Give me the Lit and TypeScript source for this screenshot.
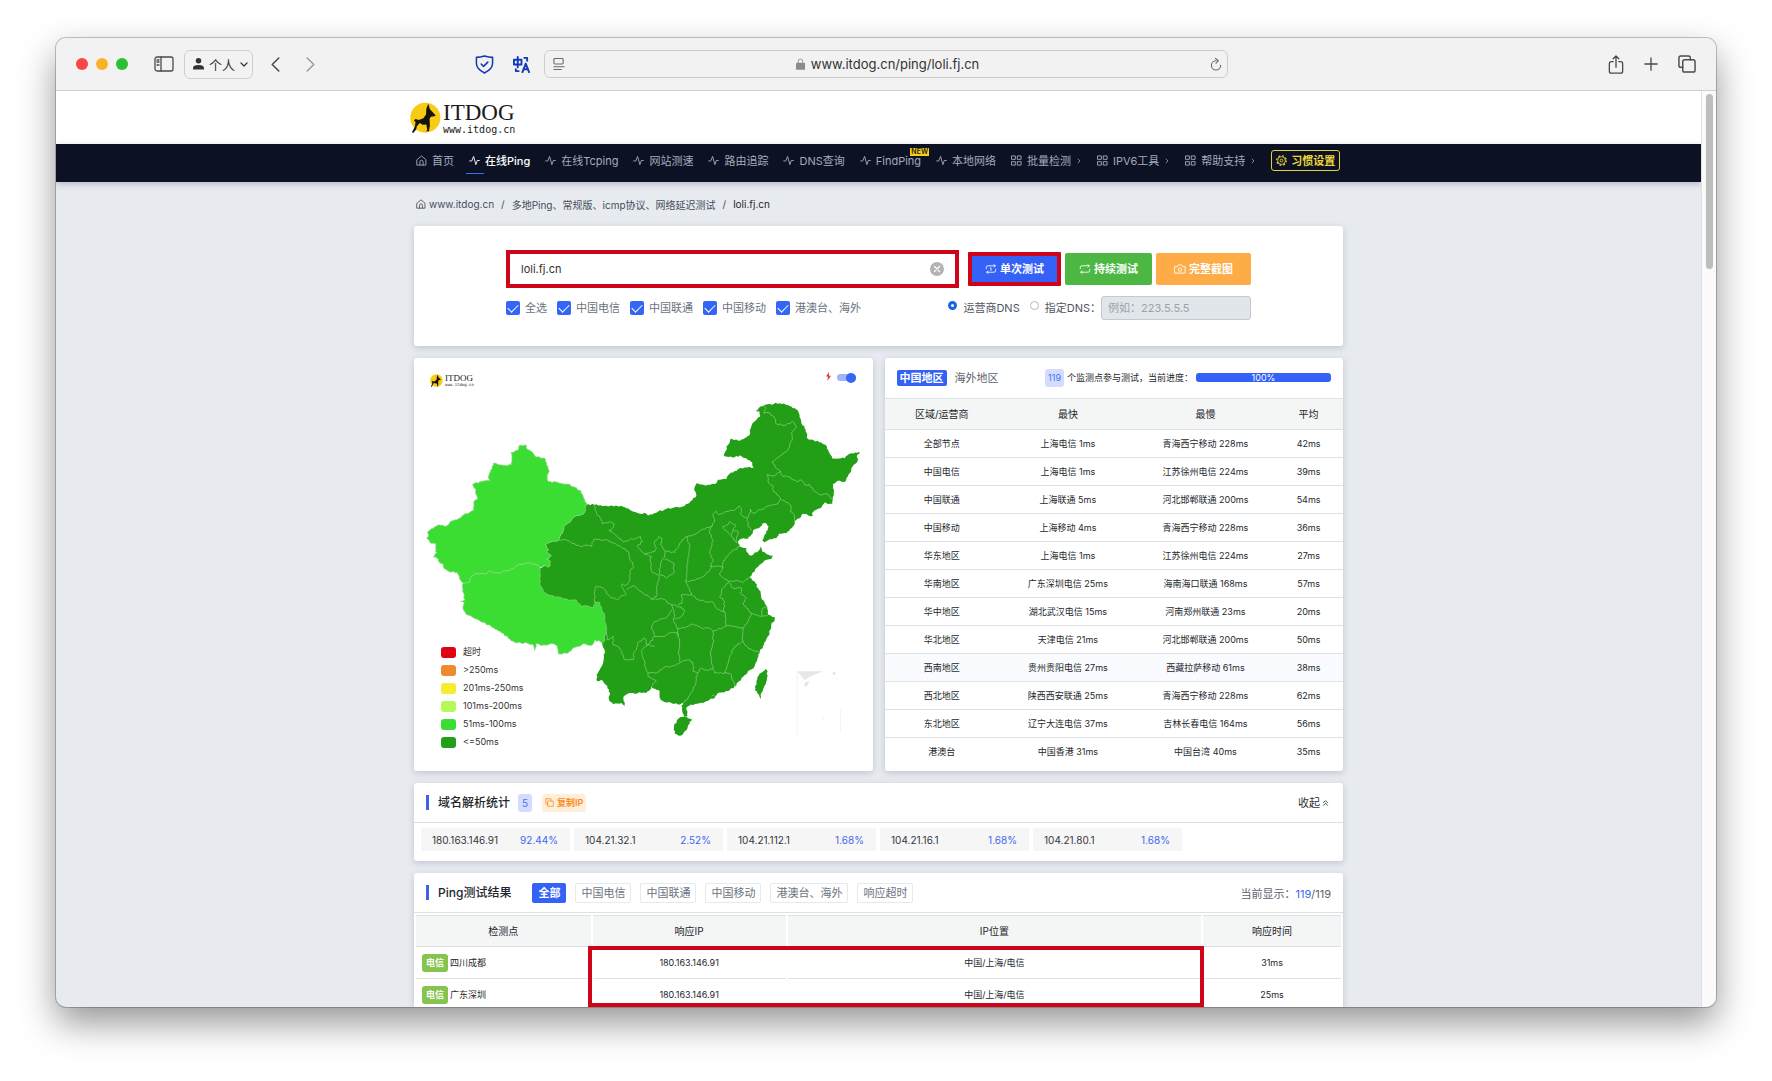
import { LitElement, html, svg, css, nothing } from "lit";
import { customElement } from "lit/decorators.js";
import { classMap } from "lit/directives/class-map.js";

/* ---------- icons ---------- */

const stroked = (body: unknown, box = "0 0 24 24", width = 2) => html`
  <svg viewBox=${box} fill="none" stroke="currentColor" stroke-width=${width}
    stroke-linecap="round" stroke-linejoin="round" aria-hidden="true">${body}</svg>`;

const icons = {
  home: stroked(svg`<path d="M2.500 10 12 2l9.500 8v12h-19z"/><path d="M8.500 22v-7a3.500 3.500 0 0 1 7 0v7"/>`),
  pulse: stroked(svg`<path d="M1.500 13H6l4-10 5 18 3-9h4.500"/>`),
  grid: stroked(svg`<rect x="2" y="2" width="7.500" height="7.500"/><rect x="14.500" y="2" width="7.500" height="7.500"/><rect x="2" y="14.500" width="7.500" height="7.500"/><rect x="14.500" y="14.500" width="7.500" height="7.500"/>`),
  chevron: stroked(svg`<path d="M8 4l8 8-8 8"/>`, "0 0 24 24", 3),
  gear: html`<svg viewBox="0 0 24 24" fill="none" stroke="currentColor" aria-hidden="true"><circle cx="12" cy="12" r="8.500" stroke-width="2"/><circle cx="12" cy="12" r="10.500" stroke-width="2.500" stroke-dasharray="4.100 4.147"/><circle cx="12" cy="12" r="3" stroke-width="2"/></svg>`,
  loopOne: stroked(svg`<path d="M3 11V8a4 4 0 0 1 4-4h17M21 1l3 3-3 3M25 12v3a4 4 0 0 1-4 4H4M7 22l-3-3 3-3M12.500 9.500l1.500-1v6"/>`, "0 0 28 23"),
  loop: stroked(svg`<path d="M3 11V8a4 4 0 0 1 4-4h17M21 1l3 3-3 3M25 12v3a4 4 0 0 1-4 4H4M7 22l-3-3 3-3"/>`, "0 0 28 23"),
  camera: stroked(svg`<path d="M2 6h6l2-4h8l2 4h6v15H2z"/><circle cx="14" cy="13" r="4"/>`, "0 0 28 23"),
  copy: stroked(svg`<path d="M8 8h14v14H8zM16 8V2H2v14h6"/>`),
  doubleUp: stroked(svg`<path d="M5 11l7-7 7 7M5 20l7-7 7 7"/>`, "0 0 24 24", 3),
  sidebar: stroked(svg`<rect x="1" y="1" width="18" height="14" rx="2"/><path d="M7 1v14M3 4h2M3 6h2M3 9h2"/>`, "0 0 20 16", 1.3),
  person: html`<svg viewBox="0 0 12 13" fill="currentColor" aria-hidden="true"><circle cx="6" cy="3" r="3"/><path d="M0 12.500V11c0-2.500 2-3.500 6-3.500s6 1 6 3.500v1.500z"/></svg>`,
  down: stroked(svg`<path d="M1 1l3 3 3-3"/>`, "0 0 8 5", 1.2),
  back: stroked(svg`<path d="M8 1L1 8l7 7"/>`, "0 0 9 16", 1.6),
  forward: stroked(svg`<path d="M1 1l7 7-7 7"/>`, "0 0 9 16", 1.6),
  shield: stroked(svg`<path d="M10 1c3 1 5.500 1.500 8.500 1.500V9c0 4-3.500 7.500-8.500 10C5 16.500 1.500 13 1.500 9V2.500C4.500 2.500 7 2 10 1z"/><path d="M6.500 9.500l2.500 2.500 4.500-4.500"/>`, "0 0 20 20", 1.6),
  translate: stroked(svg`<path d="M1 4h8v5H1zM5 1v11M12 2h3v3M3 14v2h3M10 17l3.500-9 3.500 9M11 14h5"/>`, "0 0 18 18", 2),
  reader: stroked(svg`<rect x="1" y="1" width="10" height="6" rx="1"/><path d="M1 10h11M1 13h8"/>`, "0 0 13 14", 1.2),
  lock: html`<svg viewBox="0 0 10 13" aria-hidden="true"><rect y="5" width="10" height="8" rx="1" fill="#8b8b8b"/><path d="M2.500 6V3.500a2.500 2.500 0 0 1 5 0V6" fill="none" stroke="#8b8b8b"/></svg>`,
  reload: stroked(svg`<path d="M6.500 3.500a5 5 0 1 0 5 5M6 1l3 2.500L6.500 6"/>`, "0 0 13 14", 1.2),
  share: stroked(svg`<path d="M5 7H3a2 2 0 0 0-2 2v8a2 2 0 0 0 2 2h10a2 2 0 0 0 2-2V9a2 2 0 0 0-2-2h-2M8 13V1M5 4l3-3 3 3"/>`, "0 0 16 20", 1.4),
  plus: stroked(svg`<path d="M8 1v14M1 8h14"/>`, "0 0 16 16", 1.5),
  tabs: stroked(svg`<rect x="5" y="5" width="13" height="13" rx="2"/><path d="M5 13H3a2 2 0 0 1-2-2V3a2 2 0 0 1 2-2h8a2 2 0 0 1 2 2v2"/>`, "0 0 19 19", 1.5),
  bolt: html`<svg viewBox="0 0 6 10" fill="#e03a3a" aria-hidden="true"><path d="M3.500 0L0 5h2.300L1.700 10 6 4H3.600z"/></svg>`,
  clear: html`<svg viewBox="0 0 14 14" aria-hidden="true"><circle cx="7" cy="7" r="7" fill="#b3b3b3"/><path d="M4.500 4.500l5 5M9.500 4.500l-5 5" stroke="#fff" stroke-width="1.300" stroke-linecap="round"/></svg>`,
};

const dogMark = html`
  <svg class="mark" viewBox="29 22 93 95" aria-hidden="true">
    <circle cx="75" cy="70" r="46" fill="#f8cb14"/>
    <path fill="#15120c" d="M84 27l5 17 16 17 1 4-14 2-4 6 1 20-3 19h-9l4-5-3-16-11 1-9-6-9 10-2 10-9 11-4-2 9-18 2-14-5-4 5-5 10 3 14-5 8-12 1-17z"/>
  </svg>`;

/* ---------- map geometry ---------- */

type Point = [number, number];

const parse = (text: string): Point[] =>
  text.trim().split(/\s+/).map((pair) => pair.split(",").map(Number) as Point);

const noise = (n: number) => {
  const s = Math.sin(n) * 43758.5453;
  return s - Math.floor(s) - 0.5;
};

/* Breaks each segment into short jagged steps. The offsets depend on the
   segment alone, so an edge shared by two provinces stays shared. */
const jagged = (text: string, closed = false) => {
  const points = parse(text);
  if (closed) points.push(points[0]);
  const out: string[] = [`M${points[0]}`];
  for (let i = 1; i < points.length; i++) {
    const from = points[i - 1];
    const to = points[i];
    const flip = from[0] > to[0] || (from[0] === to[0] && from[1] > to[1]);
    const [a, b] = flip ? [to, from] : [from, to];
    const dx = b[0] - a[0];
    const dy = b[1] - a[1];
    const length = Math.hypot(dx, dy) || 1;
    const steps = Math.max(1, Math.round(length / 6));
    const mids: string[] = [];
    for (let k = 1; k < steps; k++) {
      const t = k / steps;
      const shift = noise(a[0] * 12.9 + a[1] * 78.2 + b[0] * 3.7 + k * 17.3) * 5;
      mids.push(`L${(a[0] + dx * t - (dy / length) * shift).toFixed(1)},${(a[1] + dy * t + (dx / length) * shift).toFixed(1)}`);
    }
    if (flip) mids.reverse();
    out.push(...mids, `L${to}`);
  }
  return out.join("") + (closed ? "Z" : "");
};

const mainland = jagged(`560,405 590,404 620,408 665,408 690,420 715,430 740,432 745,437 775,425 800,417 850,410 870,398 890,378 884,362 890,340
 920,347 950,340 955,330 980,328 990,312 1015,298 1035,293 1062,293 1058,278 1040,265 1020,257 1005,262 980,260 972,255 985,225 993,206 1015,212
 1035,205 1050,195 1055,170 1065,155 1082,140 1080,125 1068,123 1082,110 1105,103 1140,100 1165,105 1190,118 1200,135 1205,155 1215,175 1222,190
 1225,207 1265,218 1282,230 1290,250 1298,266 1335,265 1355,250 1380,245 1372,262 1375,272 1362,285 1345,320 1338,335 1315,333 1300,343 1303,365
 1300,388 1298,402 1285,403 1275,398 1262,415 1250,420 1237,430 1240,438 1210,432 1200,445 1185,455 1180,470 1160,490 1138,492 1130,505 1110,508
 1095,517 1088,512 1100,490 1107,470 1100,460 1088,462 1078,475 1060,482 1055,495 1045,507 1025,507 1015,515 1020,530 1040,535 1045,550 1055,558
 1065,548 1078,542 1083,530 1088,545 1100,553 1120,557 1115,568 1095,572 1085,582 1070,595 1065,605 1058,610 1050,622 1065,635 1075,655 1083,665
 1085,685 1095,700 1103,712 1106,735 1125,742 1125,752 1115,765 1112,780 1105,800 1098,815 1090,830 1080,850 1073,870 1068,880 1062,895 1045,905
 1030,922 1015,938 1005,950 990,962 975,968 955,970 945,985 930,990 910,1000 885,1003 865,1010 860,1020 863,1040 852,1042 847,1020 845,1008 850,1000
 835,1005 815,1000 790,995 780,985 780,965 765,957 755,950 750,962 738,970 720,968 705,972 690,970 672,980 672,995 676,1010 665,1000 640,1003
 628,992 630,975 628,960 618,945 605,930 592,935 590,915 600,900 610,880 615,850 608,825 600,740 500,700 415,670 410,600 430,590 452,575 445,530 480,510 500,480 550,435`, true);

const xinjiang = jagged(`560,405 552,385 543,363 525,352 505,343 480,340 445,335 442,322 448,305 440,285 437,268 420,262 405,258 395,245 382,238
 380,226 360,225 357,237 345,243 333,248 336,268 334,285 318,287 300,285 280,280 273,300 266,318 270,332 245,335 218,343 228,358 231,390 222,395
 220,422 195,432 172,450 150,457 135,470 115,465 100,475 82,487 86,495 80,505 90,518 107,522 110,550 100,562 115,568 120,580 130,585 133,597
 155,607 172,608 178,625 190,640 207,638 213,622 225,612 260,612 270,603 282,610 305,608 340,597 350,588 385,580 410,585 420,592 430,588 448,592
 452,575 440,568 455,558 440,545 447,540 437,525 450,518 475,512 488,490 492,468 510,458 525,440 553,430`, true);

const gansuTip = jagged("560,405 553,430 525,440 510,458 492,468 488,490 475,512 450,518 437,525 447,540 440,545 455,558 440,568 452,575 448,592 500,600 580,500 590,404", true);

const tibet = jagged(`190,640 207,638 213,622 225,612 260,612 270,603 282,610 305,608 340,597 350,588 385,580 410,585 420,592 422,620 420,645
 430,665 445,675 490,687 530,692 545,712 560,708 580,714 585,695 600,698 608,725 615,740 620,780 615,808 608,820 585,810 577,827 550,822 540,830
 520,835 505,850 475,852 472,828 455,822 430,826 408,822 405,842 398,824 372,820 345,818 325,805 300,785 285,778 265,765 245,757 235,750 200,735
 190,720 193,700 182,695 195,690 188,665`, true);

const hainan = jagged("838,1045 855,1042 876,1048 870,1062 862,1080 845,1098 825,1092 823,1068", true);
const taiwan = jagged("1098,898 1104,905 1102,925 1092,955 1085,970 1082,988 1078,975 1066,962 1070,935 1080,912", true);

const borders = [
  "580,405 590,425 592,435 605,450 608,462 630,456 643,462 640,475 628,480 650,498 672,517 690,510 712,505 722,500 728,515 712,530 735,553 765,545 770,535 763,518 778,500 786,505 783,525 797,545 825,548 840,520 862,500 880,495 905,480 938,468 945,450 938,435 950,425 958,435 985,425 1003,422 1018,408 1025,418 1022,432 1043,445 1050,430 1052,418 1060,430 1100,410 1135,402 1143,388 1130,370 1120,360 1122,350 1108,340 1102,315 1125,318 1143,305",
  "1143,305 1130,295 1118,275 1150,250 1165,240 1178,210 1175,190 1190,170 1180,155 1160,165 1130,162 1125,145 1112,130 1092,130 1100,115 1090,105",
  "1143,305 1150,320 1170,322 1190,335 1205,330 1215,345 1230,343 1240,360 1262,375 1280,372 1300,388",
  "1143,388 1165,398 1175,408 1172,425 1182,432 1185,455",
  "1043,445 1045,470 1055,482",
  "475,512 488,510 510,515 540,530 555,527 575,530 582,508 605,512 620,510 640,520 660,528 685,545 690,565 702,590 690,605 690,630 680,645 665,645 672,660 680,672 662,680 650,690 630,680 610,655 590,648 585,665 585,695",
  "680,660 700,648 712,655 730,670 755,688 770,680 770,650 778,630 775,615 755,605 752,575 755,560 735,553",
  "797,545 795,560 783,580 778,600 780,615 800,625 822,610 822,580 795,568",
  "755,688 790,688 815,705 845,712 855,725 840,745 825,748",
  "862,500 870,530 865,570 862,600 858,635 870,660 875,675 845,675 848,700 835,705",
  "938,468 930,485 940,515 930,545 940,575 928,605 910,620 880,632 858,635",
  "930,588 970,592 960,615 985,635 1010,632 1030,638 1050,622",
  "970,592 970,575 990,550 1020,530",
  "875,675 900,692 940,698 950,715 975,728 980,768",
  "985,640 970,655 960,680 975,695 972,715 975,728",
  "985,635 1000,655 1025,655 1022,670 1040,685 1030,700 1040,715 1055,730 1085,740 1106,735",
  "1085,740 1090,715 1103,712",
  "1055,730 1045,755 1030,775 1000,770 980,768",
  "815,705 825,735 822,755 832,775 835,800",
  "815,720 800,745 765,755 755,775 765,800 790,800 810,790 835,790",
  "832,778 865,770 880,762 905,775 930,775 940,785 980,768",
  "835,790 840,820 835,850 842,878 865,870 880,878 880,905 893,910 905,895 925,903 940,895",
  "940,785 940,820 932,850 940,895 945,910 975,910 995,915 1005,950",
  "1030,775 1030,815 1005,830 990,860 975,910",
  "1030,815 1045,835 1080,850",
  "765,800 745,825 725,845 735,880 745,910 770,910 790,895 815,890 842,878",
  "620,780 622,810 640,800 640,825 660,835 675,870 700,870 705,845 718,815 735,805 740,825 765,830",
  "745,910 745,920 770,935 755,950",
  "893,910 885,950 865,985 850,1000",
  "990,495 975,480 970,470 985,465 990,455 1007,465 1000,480 1015,485 1010,505 1012,520 995,500 1000,480",
  "936,980 942,975 946,982",
].map((line) => jagged(line));

/* ---------- data ---------- */

const navItems = [
  { label: "首页", icon: icons.home },
  { label: "在线Ping", icon: icons.pulse, active: true },
  { label: "在线Tcping", icon: icons.pulse },
  { label: "网站测速", icon: icons.pulse },
  { label: "路由追踪", icon: icons.pulse },
  { label: "DNS查询", icon: icons.pulse },
  { label: "FindPing", icon: icons.pulse, fresh: true },
  { label: "本地网络", icon: icons.pulse },
  { label: "批量检测", icon: icons.grid, more: true },
  { label: "IPV6工具", icon: icons.grid, more: true },
  { label: "帮助支持", icon: icons.grid, more: true },
];

const lines = ["全选", "中国电信", "中国联通", "中国移动", "港澳台、海外"];

const legend = [
  ["red", "超时"],
  ["orange", ">250ms"],
  ["yellow", "201ms-250ms"],
  ["lime", "101ms-200ms"],
  ["green", "51ms-100ms"],
  ["deep", "<=50ms"],
];

const regions = [
  ["全部节点", "上海电信 1ms", "青海西宁移动 228ms", "42ms"],
  ["中国电信", "上海电信 1ms", "江苏徐州电信 224ms", "39ms"],
  ["中国联通", "上海联通 5ms", "河北邯郸联通 200ms", "54ms"],
  ["中国移动", "上海移动 4ms", "青海西宁移动 228ms", "36ms"],
  ["华东地区", "上海电信 1ms", "江苏徐州电信 224ms", "27ms"],
  ["华南地区", "广东深圳电信 25ms", "海南海口联通 168ms", "57ms"],
  ["华中地区", "湖北武汉电信 15ms", "河南郑州联通 23ms", "20ms"],
  ["华北地区", "天津电信 21ms", "河北邯郸联通 200ms", "50ms"],
  ["西南地区", "贵州贵阳电信 27ms", "西藏拉萨移动 61ms", "38ms"],
  ["西北地区", "陕西西安联通 25ms", "青海西宁移动 228ms", "62ms"],
  ["东北地区", "辽宁大连电信 37ms", "吉林长春电信 164ms", "56ms"],
  ["港澳台", "中国香港 31ms", "中国台湾 40ms", "35ms"],
];
const hoveredRegion = "西南地区";

const resolved = [
  ["180.163.146.91", "92.44%"],
  ["104.21.32.1", "2.52%"],
  ["104.21.112.1", "1.68%"],
  ["104.21.16.1", "1.68%"],
  ["104.21.80.1", "1.68%"],
];

const filters = ["全部", "中国电信", "中国联通", "中国移动", "港澳台、海外", "响应超时"];

const results = [
  ["电信", "四川成都", "180.163.146.91", "中国/上海/电信", "31ms"],
  ["电信", "广东深圳", "180.163.146.91", "中国/上海/电信", "25ms"],
];

/* ---------- shared styles ---------- */

const base = css`
  * { box-sizing: border-box; }
  svg { display: block; flex: none; }
  a { color: inherit; text-decoration: none; }
  button, input { font: inherit; color: inherit; margin: 0; }
  button { background: none; border: 0; padding: 0; cursor: pointer; white-space: nowrap; }
  table { border-collapse: collapse; width: 100%; table-layout: fixed; }
  th, td { padding: 0; text-align: center; white-space: nowrap; }
  .card {
    background: #fff;
    border-radius: 3px;
    box-shadow: 0 2px 6px rgba(120, 130, 155, 0.35);
  }
`;

/* ---------- browser toolbar ---------- */

@customElement("browser-bar")
export class BrowserBar extends LitElement {
  static styles = [base, css`
    :host {
      display: flex;
      align-items: center;
      height: 53px;
      padding: 0 20px;
      background: #f2f2f2;
      border-bottom: 1px solid #cfcfcf;
      color: #4a4a4a;
    }
    .side { flex: 7 1 0; display: flex; align-items: center; }
    .lights { display: flex; gap: 8px; margin-right: 26px; }
    .light { width: 12px; height: 12px; border-radius: 50%; }
    .close { background: #fc4645; }
    .min { background: #fcb125; }
    .max { background: #28c131; }
    .sidebar svg { width: 20px; height: 16px; }
    .profile {
      display: flex;
      align-items: center;
      gap: 5px;
      height: 29px;
      margin: 0 18px 0 10px;
      padding: 0 4px 0 8px;
      border: 1px solid #cfcfcf;
      border-radius: 6px;
      font-size: 13px;
      color: #333;
    }
    .profile svg { width: 11px; height: 12px; }
    .profile .caret svg { width: 8px; height: 5px; }
    .arrow svg { width: 9px; height: 15px; }
    .arrow + .arrow { margin-left: 26px; color: #9b9b9b; }
    .ext { display: flex; gap: 19px; margin: 0 14px 0 auto; color: #1239b8; }
    .ext svg { width: 19px; height: 19px; }
    .ext .tr svg { width: 17px; height: 17px; margin-top: 1px; }
    .address {
      flex: 10 1 0;
      display: flex;
      align-items: center;
      height: 28px;
      padding: 0 5px 0 8px;
      border: 1px solid #cdcdcd;
      border-radius: 6px;
      color: #6a6a6a;
    }
    .address svg { width: 12px; height: 14px; }
    .url {
      flex: 1;
      display: flex;
      justify-content: center;
      align-items: center;
      gap: 6px;
      font-size: 13px;
      color: #333;
    }
    .address .url svg { width: 9px; height: 12px; }
    .right { justify-content: flex-end; gap: 20px; }
    .right svg { width: 18px; height: 18px; }
    .right .share svg { width: 16px; height: 19px; }
    .right .plus svg { width: 14px; height: 14px; }
  `];

  render() {
    return html`
      <div class="side">
        <div class="lights">
          <span class="light close"></span><span class="light min"></span><span class="light max"></span>
        </div>
        <button class="sidebar" aria-label="边栏">${icons.sidebar}</button>
        <button class="profile">${icons.person}<span>个人</span><span class="caret">${icons.down}</span></button>
        <button class="arrow" aria-label="后退">${icons.back}</button>
        <button class="arrow" aria-label="前进">${icons.forward}</button>
        <div class="ext">
          <button aria-label="防护">${icons.shield}</button>
          <button class="tr" aria-label="翻译">${icons.translate}</button>
        </div>
      </div>
      <div class="address">
        ${icons.reader}
        <span class="url">${icons.lock}<span>www.itdog.cn/ping/loli.fj.cn</span></span>
        <button aria-label="重新载入">${icons.reload}</button>
      </div>
      <div class="side right">
        <button class="share" aria-label="共享">${icons.share}</button>
        <button class="plus" aria-label="新标签页">${icons.plus}</button>
        <button aria-label="标签页概览">${icons.tabs}</button>
      </div>`;
  }
}

/* ---------- site header ---------- */

@customElement("site-header")
export class SiteHeader extends LitElement {
  static styles = [base, css`
    :host { display: block; }
    .center { width: 929px; max-width: 100%; margin: 0 auto; }
    .brand { background: #fff; }
    .brand .center { display: flex; align-items: center; height: 53px; }
    .logo { display: flex; align-items: center; gap: 2px; margin-left: -4px; color: #1c1a17; }
    .mark { width: 31px; height: 31px; }
    .words { display: flex; flex-direction: column; padding-top: 2px; }
    .name { font: 23px/22px "Liberation Serif", serif; }
    .host { font: 10px/11px "DejaVu Sans Mono", monospace; }
    .bar { background: #0c1224; box-shadow: 0 2px 6px rgba(60, 70, 100, 0.3); position: relative; }
    nav {
      display: flex;
      align-items: center;
      gap: 15px;
      height: 38px;
      padding: 0 6px 5px 2px;
      font-size: 11px;
      line-height: 20px;
      color: #a3abbd;
    }
    .item { display: flex; align-items: center; gap: 5px; position: relative; white-space: nowrap; }
    .item svg { width: 11px; height: 11px; }
    .item .more svg { width: 6px; height: 6px; }
    .active { color: #fff; font-weight: 500; }
    .active::after {
      content: "";
      position: absolute;
      left: -3px;
      bottom: -3px;
      width: 18px;
      height: 1px;
      background: #3b6cf6;
    }
    .new {
      position: absolute;
      right: -8px;
      top: -3px;
      padding: 0 1px;
      background: #f3cf22;
      color: #2a2300;
      font-size: 7px;
      font-weight: 600;
      line-height: 8px;
    }
    .prefs {
      display: flex;
      align-items: center;
      gap: 4px;
      height: 21px;
      margin-left: auto;
      padding: 0 4px;
      border: 1px solid #e6cf3c;
      border-radius: 3px;
      color: #ecd63a;
      font-weight: 600;
    }
    .prefs svg { width: 11px; height: 11px; }
  `];

  render() {
    return html`
      <div class="brand">
        <div class="center">
          <a class="logo" href="#">${dogMark}
            <span class="words"><span class="name">ITDOG</span><span class="host">www.itdog.cn</span></span>
          </a>
        </div>
      </div>
      <div class="bar">
        <nav class="center">
          ${navItems.map((item) => html`
            <a class=${classMap({ item: true, active: !!item.active })} href="#">
              ${item.icon}<span>${item.label}</span>
              ${item.fresh ? html`<span class="new">NEW</span>` : nothing}
              ${item.more ? html`<span class="more">${icons.chevron}</span>` : nothing}
            </a>`)}
          <button class="prefs">${icons.gear}<span>习惯设置</span></button>
        </nav>
      </div>`;
  }
}

/* ---------- test form ---------- */

@customElement("test-form")
export class TestForm extends LitElement {
  static styles = [base, css`
    :host { display: block; font-size: 11px; line-height: 16px; color: #6c7380; }
    .card { display: grid; gap: 8px; padding: 24px 92px 26px; height: 120px; align-content: start; }
    .row { display: flex; align-items: center; justify-content: space-between; }
    .field {
      display: flex;
      align-items: center;
      width: 453px;
      height: 38px;
      padding-right: 11px;
      border: 4px solid #cf0418;
    }
    .field input { flex: 1; min-width: 0; border: 0; outline: 0; padding: 0 0 0 11px; color: #333; background: none; }
    .field svg { width: 14px; height: 14px; }
    .actions { display: flex; align-items: center; gap: 4px; color: #fff; font-weight: 600; }
    .actions button { display: flex; align-items: center; justify-content: center; gap: 3px; height: 32px; border-radius: 2px; }
    .actions svg { width: 12px; height: 10px; }
    .actions .once { width: 93px; height: 34px; background: #3461f6; border: 4px solid #cf0418; border-radius: 1px; }
    .actions .keep { width: 87px; background: #4cb843; }
    .actions .shot { width: 95px; background: #fdac48; }
    .checks, .dns { display: flex; align-items: center; }
    .checks { gap: 10px; }
    .checks label { display: flex; align-items: center; gap: 5px; }
    .checks input {
      appearance: none;
      display: grid;
      place-items: center;
      width: 14px;
      height: 14px;
      border-radius: 2px;
      background: #3366f6;
    }
    .checks input::after {
      content: "";
      width: 9px;
      height: 5px;
      margin-bottom: 3px;
      border-left: 1px solid #fff;
      border-bottom: 1px solid #fff;
      transform: rotate(-45deg);
    }
    .dns { color: #4f5663; }
    .dns label { display: flex; align-items: center; gap: 6px; margin-right: 10px; }
    .dns input[type="radio"] {
      appearance: none;
      width: 9px;
      height: 9px;
      margin-bottom: 5px;
      border: 1px solid #b9b9b9;
      border-radius: 50%;
    }
    .dns input[type="radio"]:checked { border: 3px solid #1766e8; }
    .dns .custom { margin-right: 0; }
    .dns input[type="text"] {
      width: 150px;
      height: 24px;
      padding: 0 6px;
      border: 1px solid #c3c9cf;
      border-radius: 3px;
      background: #e2e6ea;
    }
    .dns input::placeholder { color: #9ba1a9; opacity: 1; }
  `];

  render() {
    return html`
      <form class="card" @submit=${(e: Event) => e.preventDefault()}>
        <div class="row">
          <div class="field">
            <input type="text" aria-label="域名或IP" .value=${"loli.fj.cn"} />
            <button type="button" aria-label="清除">${icons.clear}</button>
          </div>
          <div class="actions">
            <button class="once">${icons.loopOne}<span>单次测试</span></button>
            <button class="keep" type="button">${icons.loop}<span>持续测试</span></button>
            <button class="shot" type="button">${icons.camera}<span>完整截图</span></button>
          </div>
        </div>
        <div class="row">
          <div class="checks">
            ${lines.map((name) => html`<label><input type="checkbox" checked />${name}</label>`)}
          </div>
          <div class="dns">
            <label><input type="radio" name="dns" checked />运营商DNS</label>
            <label class="custom"><input type="radio" name="dns" />指定DNS：</label>
            <input type="text" aria-label="指定DNS" placeholder="例如：223.5.5.5" disabled />
          </div>
        </div>
      </form>`;
  }
}

/* ---------- latency map ---------- */

@customElement("latency-map")
export class LatencyMap extends LitElement {
  static styles = [base, css`
    :host { display: block; }
    .card { position: relative; height: 100%; }
    .map { width: 100%; height: auto; }
    .top {
      position: absolute;
      inset: 14px 17px auto 16px;
      display: flex;
      justify-content: space-between;
    }
    .logo { display: flex; align-items: center; gap: 2px; padding-top: 2px; color: #1c1a17; }
    .mark { width: 13px; height: 13px; }
    .words { display: flex; flex-direction: column; }
    .name { font: 9px/9px "Liberation Serif", serif; }
    .host { font: 4px/4px "DejaVu Sans Mono", monospace; }
    .speed { display: flex; align-items: flex-start; gap: 6px; }
    .speed svg { width: 5px; height: 9px; }
    .speed input {
      appearance: none;
      display: flex;
      justify-content: flex-end;
      align-items: center;
      width: 19px;
      height: 7px;
      margin-top: 2px;
      border-radius: 4px;
      background: #9fb4fb;
    }
    .speed input::after { content: ""; width: 10px; height: 10px; border-radius: 50%; background: #3566f5; }
    .legend {
      position: absolute;
      left: 27px;
      bottom: 20px;
      display: grid;
      margin: 0;
      padding: 0;
      list-style: none;
      font-size: 9px;
      line-height: 18px;
      color: #333;
    }
    .legend li { display: flex; align-items: center; gap: 7px; }
    .swatch { width: 15px; height: 11px; border-radius: 3px; }
    .red { background: #dd0214; }
    .orange { background: #f08a30; }
    .yellow { background: #f6ec32; }
    .lime { background: #b3fa58; }
    .green { background: #3cdd32; }
    .deep { background: #229e17; }
  `];

  render() {
    return html`
      <div class="card">
        <svg class="map" viewBox="42 -36 1377 1236" role="img" aria-label="中国延迟地图">
          <g stroke="#8ed486" stroke-width="2" stroke-linejoin="round">
            <path d=${mainland} fill="#229e17" stroke="none"/>
            <path d=${gansuTip} fill="#229e17" stroke="none"/>
            <path d=${hainan} fill="#229e17" stroke="none"/>
            <path d=${taiwan} fill="#229e17" stroke="none"/>
            <path d=${xinjiang} fill="#3cdd32"/>
            <path d=${tibet} fill="#3cdd32"/>
            ${borders.map((d) => svg`<path d=${d} fill="none"/>`)}
          </g>
          <g fill="#e6e6e6">
            <path d="M1193 905h78l-36 14-20 12z"/>
            <path d="M1216 938l14-4-8 16-8 2z"/>
            <circle cx="1304" cy="911" r="5"/>
          </g>
          <path d="M1193 905v195M1323 1020v70M1312 925v10M1293 1000v8M1270 1038v14M1312 1085v6" fill="none" stroke="#f3f3f3" stroke-width="3"/>
        </svg>
        <div class="top">
          <span class="logo">${dogMark}
            <span class="words"><span class="name">ITDOG</span><span class="host">www.itdog.cn</span></span>
          </span>
          <label class="speed">${icons.bolt}<input type="checkbox" aria-label="快速模式" checked /></label>
        </div>
        <ul class="legend">
          ${legend.map(([tone, text]) => html`<li><span class="swatch ${tone}"></span>${text}</li>`)}
        </ul>
      </div>`;
  }
}

/* ---------- region summary ---------- */

@customElement("region-summary")
export class RegionSummary extends LitElement {
  static styles = [base, css`
    :host { display: block; font-size: 9px; color: #24272c; }
    .card { height: 100%; overflow: hidden; }
    .head { display: flex; align-items: center; height: 40px; padding: 0 12px 1px; }
    .tab { font-size: 11px; line-height: 16px; padding: 0 3px; border-radius: 2px; color: #5a616c; }
    .tab + .tab { margin-left: 5px; }
    .tab.on { background: #3461f6; color: #fff; font-weight: 600; }
    .progress { display: flex; align-items: center; gap: 3px; margin-left: auto; }
    .badge { padding: 0 3px; line-height: 18px; border-radius: 3px; background: #d3dcfd; color: #4a72f5; }
    .meter { width: 135px; height: 9px; border-radius: 3px; background: #3461f6; color: #fff; line-height: 9px; text-align: center; }
    th { height: 31px; padding-bottom: 2px; font-size: 10px; font-weight: 400; background: #f4f5f5; }
    td { height: 28px; }
    tr { border-top: 1px solid #dee2e6; }
    .name { width: 25%; }
    .fast { width: 30%; }
    .slow { width: 30%; }
    .hover { background: #f9fbfe; }
  `];

  render() {
    return html`
      <section class="card">
        <div class="head">
          <button class="tab on">中国地区</button>
          <button class="tab">海外地区</button>
          <div class="progress">
            <span class="badge">119</span>
            <span>个监测点参与测试，当前进度：</span>
            <div class="meter" role="progressbar" aria-label="测试进度" aria-valuenow="100">100%</div>
          </div>
        </div>
        <table>
          <thead>
            <tr><th class="name">区域/运营商</th><th class="fast">最快</th><th class="slow">最慢</th><th>平均</th></tr>
          </thead>
          <tbody>
            ${regions.map(([name, fast, slow, avg]) => html`
              <tr class=${classMap({ hover: name === hoveredRegion })}>
                <td>${name}</td><td>${fast}</td><td>${slow}</td><td>${avg}</td>
              </tr>`)}
          </tbody>
        </table>
      </section>`;
  }
}

/* ---------- resolved addresses ---------- */

const titleStyles = css`
  .title {
    margin: 0;
    padding-left: 9px;
    border-left: 3px solid #3b63e8;
    font-size: 12px;
    font-weight: 500;
    line-height: 15px;
    color: #22262c;
  }
  .head {
    display: flex;
    align-items: center;
    height: 40px;
    padding: 0 12px;
    border-bottom: 1px solid #dcdfe3;
  }
`;

@customElement("resolve-stats")
export class ResolveStats extends LitElement {
  static styles = [base, titleStyles, css`
    :host { display: block; font-size: 10px; line-height: 18px; }
    .card { min-height: 78px; }
    .badge { margin: 0 10px 0 8px; padding: 0 4px; border-radius: 3px; background: #d3dcfd; color: #4a72f5; }
    .copy {
      display: flex;
      align-items: center;
      gap: 3px;
      padding: 0 3px;
      border-radius: 3px;
      background: #ffeeda;
      color: #fb8c1c;
      font-size: 9px;
      font-weight: 600;
    }
    .copy svg { width: 9px; height: 9px; }
    .fold { display: flex; align-items: center; gap: 2px; margin: 0 2px 0 auto; font-size: 11px; color: #333; }
    .fold svg { width: 7px; height: 8px; }
    .list { display: flex; flex-wrap: wrap; gap: 4px; margin: 0; padding: 5px 7px; list-style: none; }
    .list li {
      display: flex;
      justify-content: space-between;
      align-items: center;
      width: 149px;
      height: 23px;
      padding: 0 12px 0 11px;
      background: #f6f6f6;
      color: #33373d;
    }
    .share { color: #3f66f2; }
  `];

  render() {
    return html`
      <section class="card">
        <div class="head">
          <h2 class="title">域名解析统计</h2>
          <span class="badge">5</span>
          <button class="copy">${icons.copy}<span>复制IP</span></button>
          <button class="fold"><span>收起</span>${icons.doubleUp}</button>
        </div>
        <ul class="list">
          ${resolved.map(([ip, share]) => html`<li><span>${ip}</span><span class="share">${share}</span></li>`)}
        </ul>
      </section>`;
  }
}

/* ---------- ping results ---------- */

@customElement("ping-results")
export class PingResults extends LitElement {
  static styles = [base, titleStyles, css`
    :host { display: block; font-size: 9px; color: #24272c; }
    .tabs { display: flex; gap: 9px; margin-left: 21px; font-size: 11px; line-height: 18px; color: #6c7380; }
    .tabs button { padding: 0 5px; border: 1px solid #e6e9ee; border-radius: 2px; }
    .tabs .on { background: #3461f6; border-color: #3461f6; color: #fff; font-weight: 600; }
    .count { margin-left: auto; font-size: 11px; color: #5a616c; }
    .count b { font-weight: 400; color: #3f66f2; }
    .sheet { position: relative; }
    table { border-collapse: separate; border-spacing: 2px 0; margin-top: 2px; }
    th { height: 32px; padding-bottom: 2px; border: 1px solid #dee2e6; border-width: 1px 0; background: #f4f5f5; font-size: 10px; font-weight: 400; }
    td { height: 32px; border-bottom: 1px solid #dee2e6; }
    .spot { width: 19%; }
    .addr { width: 21%; }
    .delay { width: 15%; }
    td.where { text-align: left; padding-left: 6px; }
    .tag { display: inline-block; margin-right: 2px; padding: 0 4px; border-radius: 3px; background: #85c44f; color: #fff; font-weight: 600; line-height: 18px; }
    .frame { position: absolute; left: 174px; right: 139px; top: 31px; height: 61px; border: 4px solid #cf0418; pointer-events: none; }
  `];

  render() {
    return html`
      <section class="card">
        <div class="head">
          <h2 class="title">Ping测试结果</h2>
          <div class="tabs">
            ${filters.map((name, i) => html`<button class=${classMap({ on: i === 0 })}>${name}</button>`)}
          </div>
          <span class="count">当前显示：<b>119</b>/119</span>
        </div>
        <div class="sheet">
          <table>
            <thead>
              <tr><th class="spot">检测点</th><th class="addr">响应IP</th><th>IP位置</th><th class="delay">响应时间</th></tr>
            </thead>
            <tbody>
              ${results.map(([line, spot, ip, place, delay]) => html`
                <tr>
                  <td class="where"><span class="tag">${line}</span>${spot}</td>
                  <td>${ip}</td><td>${place}</td><td>${delay}</td>
                </tr>`)}
            </tbody>
          </table>
          <div class="frame"></div>
        </div>
      </section>`;
  }
}

/* ---------- page ---------- */

@customElement("app-root")
export class AppRoot extends LitElement {
  static styles = [base, css`
    :host {
      display: block;
      height: 100vh;
      padding: 38px 56px 74px;
      box-sizing: border-box;
      overflow: hidden;
      background: #fff;
      font-family: Inter, "Noto Sans CJK SC", sans-serif;
    }
    .window {
      display: flex;
      flex-direction: column;
      height: 100%;
      border-radius: 10px;
      overflow: hidden;
      background: #e7eaef;
      box-shadow: 0 0 0 1px rgba(0, 0, 0, 0.22), 0 16px 36px rgba(0, 0, 0, 0.42);
    }
    .view { flex: 1; min-height: 0; display: flex; }
    .page { flex: 1; min-width: 0; overflow: hidden; }
    .track { width: 15px; padding: 3px 3px 0 4px; background: #fafafa; border-left: 1px solid #e0e0e0; }
    .thumb { height: 175px; border-radius: 4px; background: #bcbdbd; }
    .content { display: grid; gap: 12px; width: 929px; max-width: 100%; margin: 0 auto; }
    .crumbs {
      display: flex;
      align-items: center;
      gap: 7px;
      height: 32px;
      padding: 12px 2px 0;
      font-size: 10px;
      color: #454d5a;
    }
    .crumbs a { display: flex; align-items: center; gap: 3px; }
    .crumbs svg { width: 10px; height: 10px; }
    .here { color: #22262c; }
    .pair { display: grid; grid-template-columns: 1fr 1fr; gap: 12px; min-height: 413px; }
  `];

  render() {
    return html`
      <div class="window">
        <browser-bar></browser-bar>
        <div class="view">
          <div class="page">
            <site-header></site-header>
            <main class="content">
              <div class="crumbs">
                <a href="#">${icons.home}www.itdog.cn</a><span>/</span>
                <span>多地Ping、常规版、icmp协议、网络延迟测试</span><span>/</span>
                <span class="here">loli.fj.cn</span>
              </div>
              <test-form></test-form>
              <div class="pair">
                <latency-map></latency-map>
                <region-summary></region-summary>
              </div>
              <resolve-stats></resolve-stats>
              <ping-results></ping-results>
            </main>
          </div>
          <div class="track"><div class="thumb"></div></div>
        </div>
      </div>`;
  }
}
